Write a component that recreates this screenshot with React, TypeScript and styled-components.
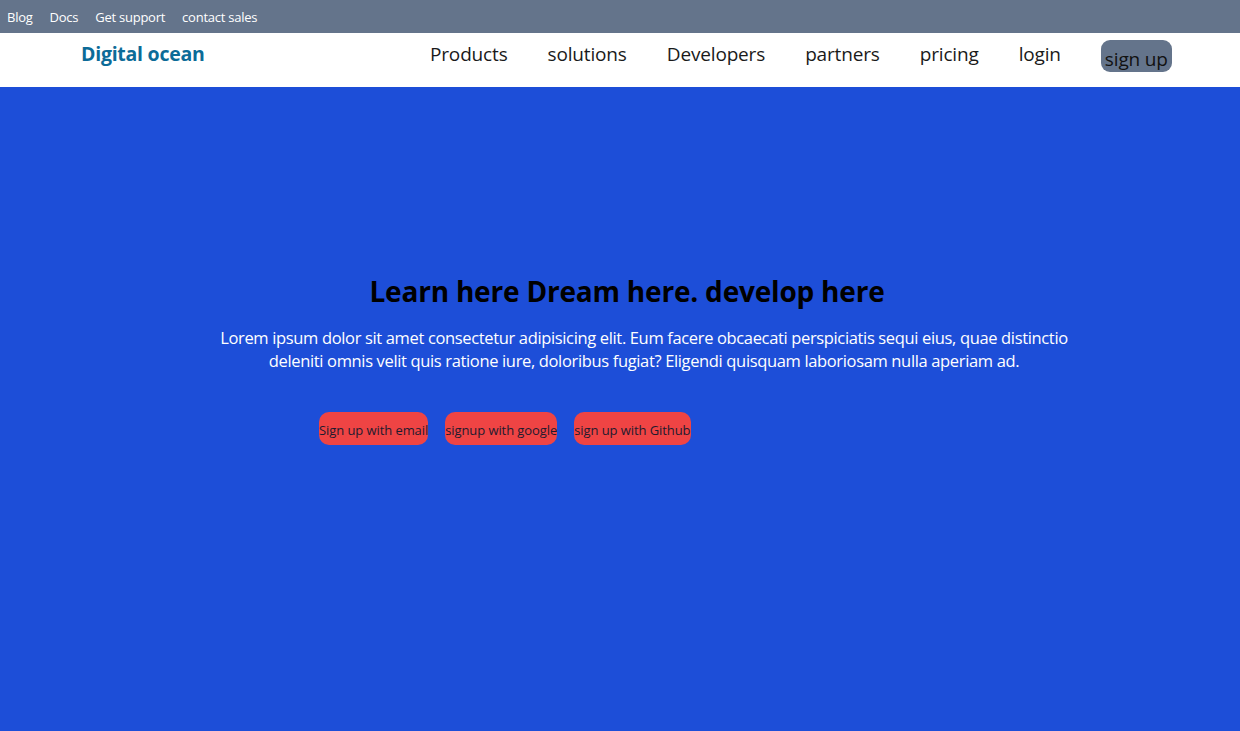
import React from "react";
import styled, { createGlobalStyle } from "styled-components";

const Global = createGlobalStyle`
  html, body { margin: 0; padding: 0; }
  body { font-family: "Open Sans", "Noto Sans", sans-serif; background: #1d4ed8; }
  * { box-sizing: border-box; }
`;

const Page = styled.div`
  display: flex;
  flex-direction: column;
  min-height: 731px;
`;

const TopBar = styled.div`
  height: 33px;
  background: #64748b;
  display: flex;
  align-items: center;
  gap: 17px;
  padding-left: 7px;
`;

const TopLink = styled.a`
  color: #ffffff;
  font-size: 13px;
  letter-spacing: -0.25px;
  text-decoration: none;
`;

const NavBar = styled.nav`
  height: 54px;
  background: #ffffff;
  display: flex;
  align-items: flex-start;
  padding: 7px 0 0 81px;
`;

const Logo = styled.div`
  color: #0c6b98;
  font-weight: 700;
  font-size: 19.5px;
  line-height: 26px;
  letter-spacing: -0.25px;
  width: 349px;
  margin-top: 1px;
`;

const NavList = styled.div`
  display: flex;
  align-items: flex-start;
  gap: 40px;
`;

const NavLink = styled.a`
  color: #1a1a1a;
  font-size: 19px;
  line-height: 26px;
  letter-spacing: -0.16px;
  text-decoration: none;
  margin-top: 1px;
`;

const SignUp = styled.button`
  background: #64748b;
  color: #111111;
  border: none;
  border-radius: 9px;
  font-family: inherit;
  font-size: 19px;
  line-height: 26px;
  letter-spacing: -0.16px;
  height: 32px;
  padding: 5px 4px 0;
`;

const Hero = styled.section`
  flex: 1;
  background: #1d4ed8;
  display: flex;
  flex-direction: column;
  padding-top: 184px;
`;

const Title = styled.h1`
  margin: 0;
  text-align: center;
  color: #000000;
  font-size: 28px;
  font-weight: 700;
  line-height: 40px;
  letter-spacing: -0.2px;
  padding-left: 14px;
`;

const Lead = styled.p`
  margin: 15px auto 0;
  width: 930px;
  padding-left: 48px;
  text-align: center;
  color: #ffffff;
  font-size: 16.5px;
  line-height: 23px;
  letter-spacing: -0.35px;
`;

const Actions = styled.div`
  display: flex;
  gap: 17px;
  padding-left: 319px;
  margin-top: 40px;
`;

const ActionButton = styled.button`
  background: #ef4444;
  color: #1e1b2e;
  border: none;
  border-radius: 10px;
  height: 33px;
  padding: 2px 0 0;
  font-family: inherit;
  font-size: 13px;
  letter-spacing: -0.08px;
  white-space: nowrap;
`;

export default function App() {
  return (
    <Page>
      <Global />
      <TopBar>
        <TopLink>Blog</TopLink>
        <TopLink>Docs</TopLink>
        <TopLink>Get support</TopLink>
        <TopLink>contact sales</TopLink>
      </TopBar>
      <NavBar>
        <Logo>Digital ocean</Logo>
        <NavList>
          <NavLink>Products</NavLink>
          <NavLink>solutions</NavLink>
          <NavLink>Developers</NavLink>
          <NavLink>partners</NavLink>
          <NavLink>pricing</NavLink>
          <NavLink>login</NavLink>
          <SignUp>sign up</SignUp>
        </NavList>
      </NavBar>
      <Hero>
        <Title>Learn here Dream here. develop here</Title>
        <Lead>
          Lorem ipsum dolor sit amet consectetur adipisicing elit. Eum facere obcaecati perspiciatis sequi eius, quae distinctio deleniti omnis velit quis ratione iure, doloribus fugiat? Eligendi quisquam laboriosam nulla aperiam ad.
        </Lead>
        <Actions>
          <ActionButton>Sign up with email</ActionButton>
          <ActionButton>signup with google</ActionButton>
          <ActionButton>sign up with Github</ActionButton>
        </Actions>
      </Hero>
    </Page>
  );
}
